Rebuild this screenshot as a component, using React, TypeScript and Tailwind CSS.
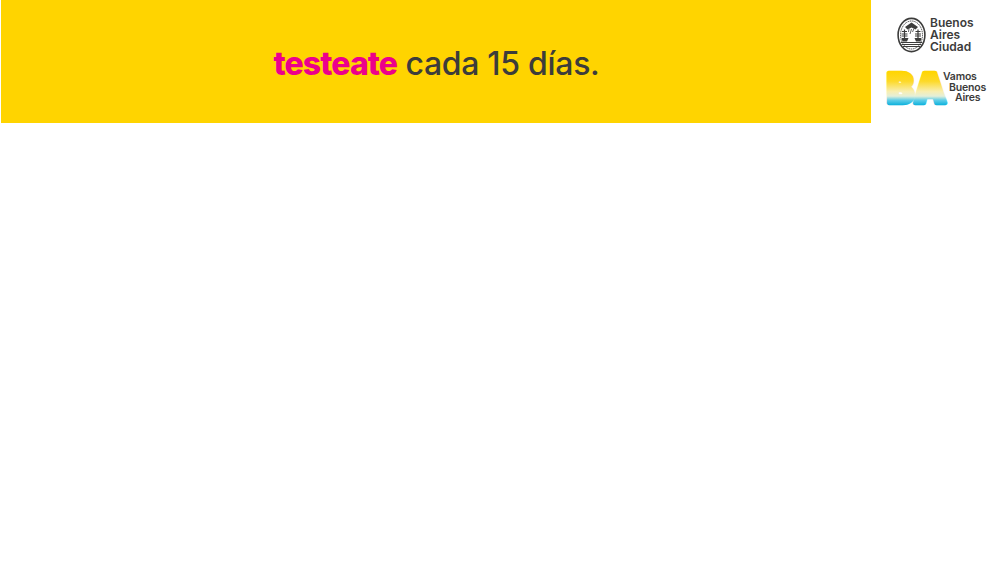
function CitySeal() {
  return (
    <svg width="29" height="36" viewBox="0 0 29 36" className="shrink-0">
      <ellipse cx="14.5" cy="18" rx="13.4" ry="16.6" fill="#fff" stroke="#3c3c3b" strokeWidth="1.6" />
      <ellipse cx="14.5" cy="18" rx="11" ry="14" fill="none" stroke="#3c3c3b" strokeWidth="1" strokeDasharray="1.2 0.7" />
      <path d="M8 10 L14.5 5.5 L21 10 L18.5 12.5 L14.5 10.5 L10.5 12.5 Z" fill="#3c3c3b" />
      <path d="M14.5 12 L13 17 M17 11.5 L15.5 15 M12 11.5 L11.5 15" stroke="#666" strokeWidth="1" />
      <path d="M4.5 21 H11.5 L10 24.5 H5.5 Z M17.5 21 H24.5 L23.5 24.5 H19 Z" fill="#3c3c3b" />
      <path d="M7.5 12.5 V21 M5 14.5 H10 M4.5 17 H10.5 M4.5 19 H10.5 M21 12.5 V21 M18.5 14.5 H23.5 M18 17 H24 M18 19 H24" stroke="#3c3c3b" strokeWidth="1.2" />
      <path d="M3.8 25.5 H25.2 M4.6 27.5 H24.4 M6 29.5 H23" stroke="#3c3c3b" strokeWidth="1.2" />
    </svg>
  );
}

function BaMark() {
  return (
    <svg width="64" height="36" viewBox="0 0 64 36" className="shrink-0">
      <defs>
        <linearGradient id="baFill" gradientUnits="userSpaceOnUse" x1="0" y1="1" x2="0" y2="35">
          <stop offset="0" stopColor="#ffd500" />
          <stop offset="0.3" stopColor="#fdd928" />
          <stop offset="0.6" stopColor="#f8eeb0" />
          <stop offset="0.74" stopColor="#e4efd8" />
          <stop offset="0.86" stopColor="#5fcde8" />
          <stop offset="1" stopColor="#0fb2dc" />
        </linearGradient>
      </defs>
      <text
        x="2"
        y="32.5"
        fontFamily="'Inter', sans-serif"
        fontWeight="900"
        fontSize="41"
        textLength="59"
        lengthAdjust="spacingAndGlyphs"
        fill="url(#baFill)"
        stroke="url(#baFill)"
        strokeWidth="4.4"
        strokeLinejoin="round"
      >
        BA
      </text>
    </svg>
  );
}

function App() {
  return (
    <div className="min-h-[565px] bg-white">
      <header className="flex h-[123px] pl-px">
        <section className="flex w-[870px] items-center justify-center bg-[#ffd400] pt-[4px] pl-[1px]">
          <h1 className="text-[32px] leading-none font-medium tracking-[-0.3px] text-[#3c3c3b] font-['Inter',sans-serif]">
            <span className="font-extrabold tracking-[-0.9px] text-[#ec008c]">testeate</span> cada 15 días.
          </h1>
        </section>
        <aside className="flex flex-1 flex-col pt-[17px] pl-[14px] text-[#3c3c3b] font-['Inter',sans-serif] font-semibold">
          <div className="ml-[12px] flex items-center gap-[4px]">
            <CitySeal />
            <div className="text-[12px] leading-[12px]">
              <p>Buenos</p>
              <p>Aires</p>
              <p>Ciudad</p>
            </div>
          </div>
          <div className="mt-[17px] flex items-center">
            <BaMark />
            <div className="text-[10.5px] leading-[10.5px] tracking-[-0.2px]">
              <p className="-ml-[6px]">Vamos</p>
              <p>Buenos</p>
              <p className="ml-[6px]">Aires</p>
            </div>
          </div>
        </aside>
      </header>
    </div>
  );
}

export default App;
